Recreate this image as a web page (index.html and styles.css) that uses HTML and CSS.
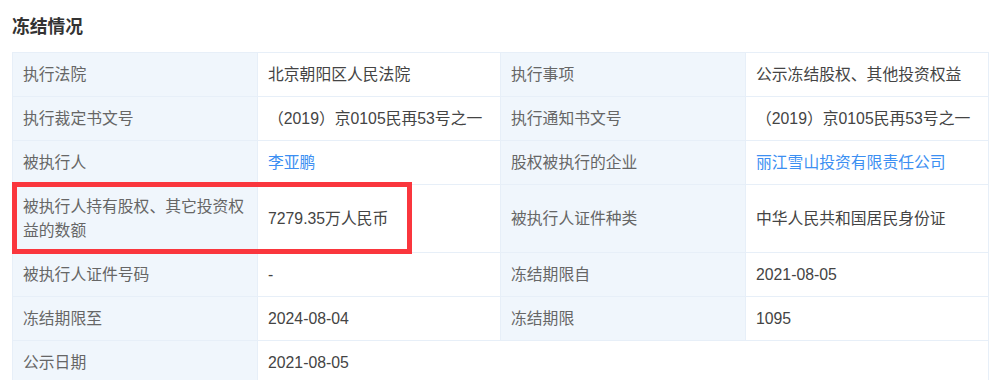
FILE: index.html
```html
<!DOCTYPE html>
<html lang="zh-CN">
<head>
<meta charset="utf-8">
<title>冻结情况</title>
<link rel="stylesheet" href="styles.css">
</head>
<body>
<div class="page">
  <h2 class="title">冻结情况</h2>
  <div class="table-wrap">
    <table class="info">
      <colgroup>
        <col class="c-label"><col class="c-value"><col class="c-label"><col class="c-value">
      </colgroup>
      <tbody>
        <tr>
          <td class="label">执行法院</td>
          <td class="value">北京朝阳区人民法院</td>
          <td class="label">执行事项</td>
          <td class="value">公示冻结股权、其他投资权益</td>
        </tr>
        <tr>
          <td class="label">执行裁定书文号</td>
          <td class="value">（2019）京0105民再53号之一</td>
          <td class="label">执行通知书文号</td>
          <td class="value">（2019）京0105民再53号之一</td>
        </tr>
        <tr>
          <td class="label">被执行人</td>
          <td class="value"><a class="link" href="#">李亚鹏</a></td>
          <td class="label">股权被执行的企业</td>
          <td class="value"><a class="link" href="#">丽江雪山投资有限责任公司</a></td>
        </tr>
        <tr>
          <td class="label">被执行人持有股权、其它投资权益的数额</td>
          <td class="value">7279.35万人民币</td>
          <td class="label">被执行人证件种类</td>
          <td class="value">中华人民共和国居民身份证</td>
        </tr>
        <tr>
          <td class="label">被执行人证件号码</td>
          <td class="value">-</td>
          <td class="label">冻结期限自</td>
          <td class="value">2021-08-05</td>
        </tr>
        <tr>
          <td class="label">冻结期限至</td>
          <td class="value">2024-08-04</td>
          <td class="label">冻结期限</td>
          <td class="value">1095</td>
        </tr>
        <tr>
          <td class="label">公示日期</td>
          <td class="value" colspan="3">2021-08-05</td>
        </tr>
      </tbody>
    </table>
    <div class="highlight"></div>
  </div>
</div>
</body>
</html>
```

FILE: styles.css
```css
html, body {
  margin: 0;
  padding: 0;
  background: #ffffff;
}

body {
  font-family: "Liberation Sans", "Noto Sans CJK SC", sans-serif;
  color: #333333;
}

.page {
  padding: 13px 12px 0 12px;
}

.title {
  margin: 0 0 15px 0;
  font-family: "Noto Sans CJK SC", sans-serif;
  font-size: 17.8px;
  line-height: 24px;
  font-weight: bold;
  color: #333333;
}

.table-wrap {
  position: relative;
  width: 976px;
}

.info {
  width: 976px;
  border-collapse: collapse;
  table-layout: fixed;
  font-size: 15.8px;
  line-height: 24px;
}

.c-label { width: 245px; }
.c-value { width: 243px; }

.info td {
  border: 1px solid #e7eff8;
  padding: 9.5px 10px;
  vertical-align: middle;
  word-break: break-all;
}

.label {
  background: #f0f6fc;
  color: #666666;
}

.value {
  background: #ffffff;
  color: #444444;
}

.link {
  color: #3c8ff2;
  text-decoration: none;
}

.highlight {
  position: absolute;
  left: 0;
  top: 130px;
  width: 400px;
  height: 72px;
  box-sizing: border-box;
  border: 5px solid #fa363d;
  pointer-events: none;
}
```
